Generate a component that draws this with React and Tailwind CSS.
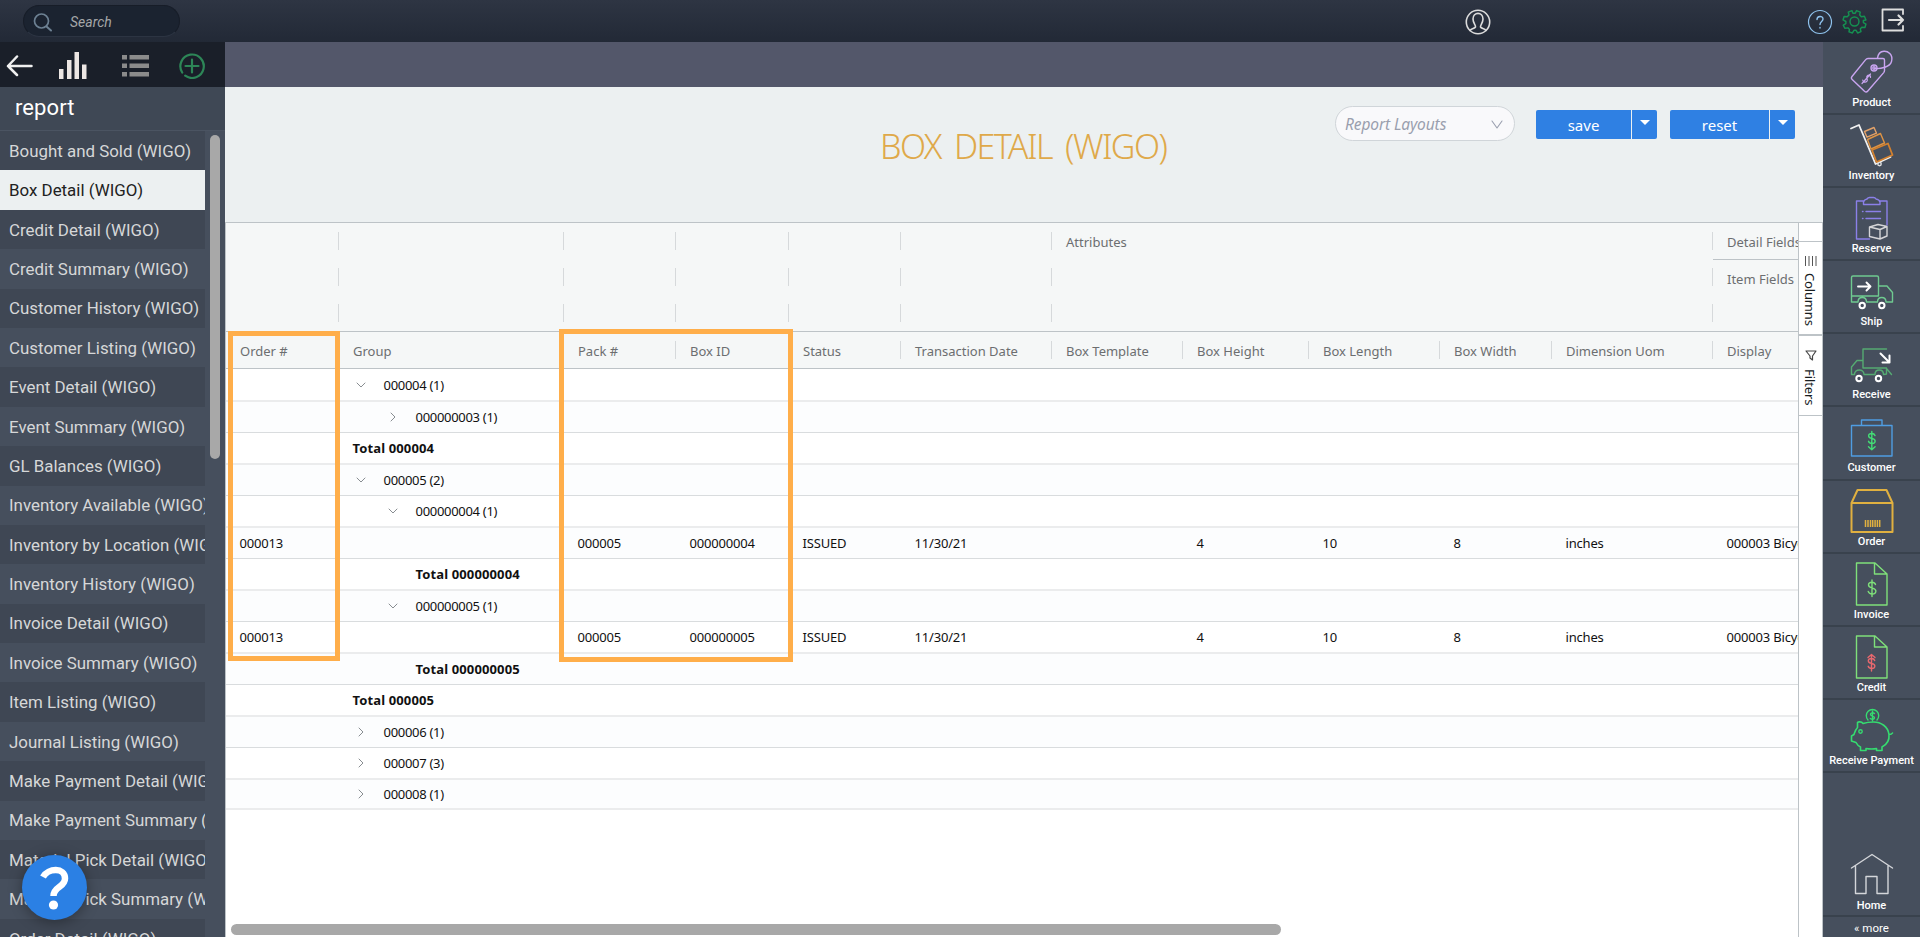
import { ChevronDown, ChevronRight } from "lucide-react";

const reports = [
  "Bought and Sold (WIGO)",
  "Box Detail (WIGO)",
  "Credit Detail (WIGO)",
  "Credit Summary (WIGO)",
  "Customer History (WIGO)",
  "Customer Listing (WIGO)",
  "Event Detail (WIGO)",
  "Event Summary (WIGO)",
  "GL Balances (WIGO)",
  "Inventory Available (WIGO)",
  "Inventory by Location (WIGO)",
  "Inventory History (WIGO)",
  "Invoice Detail (WIGO)",
  "Invoice Summary (WIGO)",
  "Item Listing (WIGO)",
  "Journal Listing (WIGO)",
  "Make Payment Detail (WIGO)",
  "Make Payment Summary (WIGO)",
  "Material Pick Detail (WIGO)",
  "Material Pick Summary (WIGO)",
  "Order Detail (WIGO)",
];

const columns = [
  { key: "order", label: "Order #", width: "w-[113px]" },
  { key: "group", label: "Group", width: "w-[225px]" },
  { key: "pack", label: "Pack #", width: "w-[112px]" },
  { key: "box", label: "Box ID", width: "w-[113px]" },
  { key: "status", label: "Status", width: "w-[112px]" },
  { key: "date", label: "Transaction Date", width: "w-[151px]" },
  { key: "template", label: "Box Template", width: "w-[131px]" },
  { key: "height", label: "Box Height", width: "w-[126px]" },
  { key: "length", label: "Box Length", width: "w-[131px]" },
  { key: "boxWidth", label: "Box Width", width: "w-[112px]" },
  { key: "uom", label: "Dimension Uom", width: "w-[161px]" },
  { key: "display", label: "Display", width: "w-[160px]" },
];

const shipped = {
  order: "000013",
  pack: "000005",
  status: "ISSUED",
  date: "11/30/21",
  height: "4",
  length: "10",
  boxWidth: "8",
  uom: "inches",
  display: "000003 Bicycle",
};

const rows = [
  { h: "h-[33px]", group: "000004 (1)", level: 0, open: true },
  { h: "h-[31px]", group: "000000003 (1)", level: 1, open: false },
  { h: "h-[32px]", total: "Total 000004", level: 0 },
  { h: "h-[31px]", group: "000005 (2)", level: 0, open: true },
  { h: "h-[32px]", group: "000000004 (1)", level: 1, open: true },
  { h: "h-[31px]", data: { ...shipped, box: "000000004" } },
  { h: "h-[32px]", total: "Total 000000004", level: 1 },
  { h: "h-[31px]", group: "000000005 (1)", level: 1, open: true },
  { h: "h-[32px]", data: { ...shipped, box: "000000005" } },
  { h: "h-[31px]", total: "Total 000000005", level: 1 },
  { h: "h-[32px]", total: "Total 000005", level: 0 },
  { h: "h-[31px]", group: "000006 (1)", level: 0, open: false },
  { h: "h-[32px]", group: "000007 (3)", level: 0, open: false },
  { h: "h-[30px]", group: "000008 (1)", level: 0, open: false },
];

const Svg = ({ children, className = "", ...props }) => (
  <svg
    fill="none"
    stroke="currentColor"
    strokeWidth="1.4"
    strokeLinecap="round"
    strokeLinejoin="round"
    className={className}
    {...props}
  >
    {children}
  </svg>
);

const Dollar = ({ stroke }) => (
  <g stroke={stroke}>
    <path d="M25.500 22.500c-.6-1.700-2-2.300-3.500-2.300-1.900 0-3.500 1-3.500 2.900 0 4.100 7.400 1.900 7.400 5.900 0 1.900-1.700 3-3.800 3-1.900 0-3.400-.8-3.900-2.600M22 18v16.500" />
  </g>
);

/* Icons share a 44x44 canvas */
const icons = {
  Product: (
    <g stroke="#c9a5f0">
      <path d="M28 8.500H18q-1.500.2-2.500 1.400L2 26.500q-1.300 1.700.2 3L14.500 41.200q1.800 1.500 3.300-.2L33.700 22.600q.8-1 .8-2V10q0-1.500-1.500-1.500h-5" />
      <circle cx="24" cy="18" r="3" />
      <circle cx="24" cy="18" r="1.200" />
      <path d="M24.500 18.500C31 19 40 17 41.500 11.500 43.500 4 37.500 1 34 1.200c-4 .2-6 2.800-6.500 7" />
      <path strokeWidth="1.200" d="M20.500 27.500c.5-2-1.500-3.200-3-2-2 1.500.3 3.500-.3 5.200-.8 2-4.300 1.800-4.500-.7M20.500 24 12 33.500" />
    </g>
  ),
  Inventory: (
    <g>
      <path stroke="#f1f1f1" strokeWidth="1.800" d="M1 5.500 9 2l16.500 39 15-7" />
      <circle cx="29.500" cy="41" r="1.700" stroke="#e0e0e0" />
      <path stroke="#e3a269" d="m14.500 8.500 9.500-4 2.500 5.700-9.500 4z" />
      <path stroke="#df9444" d="m17.500 16.500 13-6 4 9.500-13.500 6z" />
      <path stroke="#d3812f" strokeWidth="1.800" d="m22 27 16-6.500 4.500 11.500-16 7z" />
    </g>
  ),
  Reserve: (
    <g stroke="#8b80e8">
      <path d="M13.500 5H6.500v38h13M30 5h7v24M13.500 8.500h16.500V6q-.8-2.500-4-3-.8-1.500-2.500-1.500h-4Q18 1.500 17 3q-2.700.5-3.500 3z" />
      <path d="M12.500 15.500h.5m3 0h14.500m-18 7h.5m3 0h14.500" />
      <path stroke="#d5d5d8" d="m19.500 31 8.500-2.500 9 2v9.500l-7 3-10.500-2.500zm0 0 10.500 2.500 7-3m-7 3V43" />
    </g>
  ),
  Ship: (
    <g stroke="#6fca90">
      <path d="M8 33H1.500V8.500q0-1.500 1.500-1.500h24q1.500 0 1.500 1.500V27H1.500M16.500 33h11M36 33h6.500V23.500L37 17h-8.500M8 33c0-6 8.500-6 8.500 0M27.500 33c0-6 8.500-6 8.500 0" />
      <path stroke="#fff" strokeWidth="1.900" d="M8 17.500h12.500M16.500 13.500l4 4-4 4" />
      <circle stroke="#fff" strokeWidth="2" cx="12.200" cy="36.500" r="2.700" />
      <circle stroke="#fff" strokeWidth="2" cx="31.800" cy="36.500" r="2.700" />
    </g>
  ),
  Receive: (
    <g stroke="#55ab72">
      <path d="M36.500 7H13v19h23.500v6l-3 .5M13 18.500H7L1.500 25v7.500h3M14 32.500h11M36.500 26.500 41.500 32.500M4.500 32.500c0-6 9.500-6 9.500 0M25 32.500c0-6 8.500-6 8.500 0" />
      <path stroke="#fff" strokeWidth="2" d="m30.500 11.500 9 9m0-7v7h-7" />
      <circle stroke="#fff" strokeWidth="2" cx="9" cy="36.500" r="2.700" />
      <circle stroke="#fff" strokeWidth="2" cx="28.500" cy="36.500" r="2.700" />
    </g>
  ),
  Customer: (
    <g stroke="#4f9de2">
      <path d="M1.500 10.500h40.500v30.500H1.500zM11.500 10.500V5h20.500v5.500" />
      <g stroke="#43dc75">
        <path d="M25 20.500c-.5-1.500-1.600-2-3.200-2-4.300 0-4.200 4.200 0 4.900 4.800.8 4 5.100.2 5.100-1.900 0-3-.7-3.500-2.200M21.800 16.500v18M18.500 31.800l3.300 3 3.300-3" />
      </g>
    </g>
  ),
  Order: (
    <g stroke="#e0b040" strokeWidth="2">
      <path d="M1.500 14h41v29h-41zM1.500 14 7.500 1h29l6 13" />
      <path strokeWidth="1.500" strokeLinecap="butt" d="M15.500 31v7m2.500-7v7m2.500-7v7m2.200-7v7m2.400-7v7m2.300-7v7m2.300-7v7" />
    </g>
  ),
  Invoice: (
    <g stroke="#7fe07a">
      <path d="M6.500 1H25l12 11v31H6.500zM24.500 1v11H37" />
      <Dollar stroke="#7fe07a" />
    </g>
  ),
  Credit: (
    <g stroke="#7fe07a">
      <path d="M6.500 1H25l12 11v31H6.500zM24.500 1v11H37" />
      <path stroke="#e8686e" d="M24.700 25.500c-.5-1.500-1.600-2-3.200-2-4.300 0-4.200 4.200 0 4.900 4.800.8 4 5.100.2 5.100-1.900 0-3-.7-3.500-2.200M21.500 19.500v16.500M18 22.500l3.500-3 3.500 3" />
    </g>
  ),
  "Receive Payment": (
    <g stroke="#35dc70">
      <path d="M18 12a6.200 6.200 0 1 1 9 0" />
      <path d="M24.500 5.500c-1.500-1.300-4-.8-4 1 0 2 4 1.200 4 3.200 0 1.900-2.800 2-4.200.7M22.500 3v10" />
      <path strokeWidth="1.600" d="M13 15.500c-1.500-2.300-5-1.700-5.500-1v5C5.500 21.500 5 23.500 4 26.500l-2.500 1.500v5L6 34.500c1 2 2.500 3.500 4.500 4.500V42.500H16v-2q6 1 10.500 0v2H32V39c5-2.500 7.500-7 7-12.500 2 0 3-.5 3.500-1.500M39 26.500c-1-8-8-12.500-15.500-12.500-4.500 0-7.500.5-10.500 1.500" />
      <circle cx="10.500" cy="23.500" r="1.700" />
    </g>
  ),
  Home: (
    <path stroke="#d4d6da" d="M1.500 15 22 1.500 42.500 15M5.500 13v27.500H16V23.500h11v17h11V13" />
  ),
};

const modules = [
  "Product",
  "Inventory",
  "Reserve",
  "Ship",
  "Receive",
  "Customer",
  "Order",
  "Invoice",
  "Credit",
  "Receive Payment",
];

const Module = ({ name }) => (
  <div className="flex h-full flex-col items-center pt-[8px]">
    <Svg viewBox="0 0 44 44" className="h-[44px] w-[44px] shrink-0">
      {icons[name]}
    </Svg>
    <span className="mt-[2px] whitespace-nowrap text-[11px] leading-[14px] font-medium text-white">{name}</span>
  </div>
);

const TopBar = () => (
  <header className="flex h-[42px] shrink-0 items-center bg-linear-to-b from-[#2e3543] to-[#222936]">
    <div className="ml-[23px] flex h-[32px] w-[157px] items-center rounded-full border border-[#171d28] border-b-[#2c3442] bg-[#1b2330]">
      <Svg viewBox="0 0 20 20" className="mt-[3px] ml-[9px] h-[20px] w-[20px] text-[#6d8193]" strokeWidth="1.700">
        <circle cx="8.500" cy="8" r="7" />
        <path strokeWidth="2" d="m13.500 13.500 4.500 4" />
      </Svg>
      <span className="mt-[2px] ml-[17px] text-[14px] text-[#a5a7a8] italic">Search</span>
    </div>
    <Svg viewBox="0 0 26 26" className="mt-px ml-[1285px] h-[26px] w-[26px] text-[#dcdcdc]" strokeWidth="1.600">
      <circle cx="13" cy="13" r="11.700" />
      <path d="M5 21.500c1.500-2 4.500-2 5.500-3.500.6-1.500-2.500-4-2.500-8C8 2.500 18 2.500 18 10c0 4-3 6.500-2.500 8 1 1.500 4 1.500 5.500 3.500" />
    </Svg>
    <div className="mt-px ml-auto flex items-center pr-[15px]">
      <Svg viewBox="0 0 26 26" className="h-[26px] w-[26px] text-[#8fc3ee]">
        <circle cx="13" cy="13" r="11.500" strokeWidth="1.200" />
        <path d="M10 10.500c0-4 6-4 6-.5 0 2.500-3 2.500-3 5.500M13 18.500v.5" />
      </Svg>
      <Svg viewBox="0 0 24 24" className="ml-[9px] h-[25px] w-[25px] text-[#159151]">
        <circle cx="12" cy="12" r="4.300" />
        <path d="m10.500 4-1-2.500L6 3l.7 2.700L5 7.500l-3-.3-1 3.300L3.700 12l0 2-2.500 1.500 1.500 3 3-.4 1.500 1.500L6.700 22l3.300 1 1.500-2.500h2L15 23l3.200-1.300-.6-2.700 1.500-1.500 2.900.3 1-3.300-2.500-1.500v-2L23 10.500 21.500 7l-3 .4L17 5.700 17.500 3 14 1.500 12.700 4z" />
      </Svg>
      <Svg viewBox="0 0 24 24" className="mb-[3px] ml-[14px] h-[24px] w-[24px] text-[#dedede]" strokeWidth="1.800">
        <path d="M22 6V1.500H1.500v21H22V18" />
        <path strokeWidth="2.200" d="M8 12h14m-4.500-4.500L22 12l-4.500 4.500" />
      </Svg>
    </div>
  </header>
);

const ReportMenu = () => (
  <aside className="flex w-[225px] shrink-0 flex-col bg-[#464f5d]">
    <div className="flex h-[45px] shrink-0 items-center bg-[#1a1f29] pt-[2px]">
      <Svg viewBox="0 0 26 22" className="ml-[6px] h-[22px] w-[27px] text-[#f0f0f0]" strokeWidth="2.500">
        <path d="M1.500 11H25M10.500 1.500 1.500 11l9 9" />
      </Svg>
      <svg viewBox="0 0 28 27" className="ml-[26px] h-[27px] w-[28px]" fill="#ece6e3">
        <rect x="0" y="17" width="4.500" height="10" />
        <rect x="8" y="8" width="4.500" height="19" />
        <rect x="15.500" y="0" width="4.500" height="27" />
        <rect x="23" y="12.500" width="4.500" height="14.500" />
      </svg>
      <svg viewBox="0 0 27 22" className="ml-[35px] h-[22px] w-[27px]" fill="#8b8b8b">
        <path d="M0 0h5v4.500H0zM7.500 0H27v4.500H7.500zM0 8.500h5V13H0zM7.500 8.500H27V13H7.500zM0 17h5v4.500H0zM7.500 17H27v4.500H7.500z" />
      </svg>
      <Svg viewBox="0 0 26 26" className="ml-[30px] h-[26px] w-[26px] text-[#2d8657]" strokeWidth="2.200">
        <path d="M3.200 19.500a11.700 11.700 0 1 1 3 3.200M6.500 13h13M13 6.500v13" />
      </Svg>
    </div>
    <div className="flex h-[44px] shrink-0 items-center border-b border-[#4b5462] bg-[#3f4855] pl-[15px] text-[22px] text-white">
      <span className="-mt-[2px] tracking-[0.100px]">report</span>
    </div>
    <div className="flex min-h-0 flex-1">
      <ul className="w-[205px] overflow-hidden">
        {reports.map((name, i) => (
          <li
            key={name}
            className={`flex h-[39.400px] items-center overflow-hidden pt-[1.500px] pl-[9px] text-[16.900px] whitespace-nowrap ${
              i === 1 ? "bg-[#ecf0f1] text-[#222]" : i % 2 ? "bg-[#464f5d] text-[#d6d7d8]" : "bg-[#3f4754] text-[#d6d7d8]"
            }`}
          >
            {name}
          </li>
        ))}
      </ul>
      <div className="mt-[4px] ml-[5px] h-[324px] w-[10px] rounded-full bg-[#a8a8a8]" />
    </div>
  </aside>
);

const PageHeader = () => (
  <div className="flex h-[135px] shrink-0 bg-[#ecf0f1] pt-[19px]">
    <div className="w-[655px]" />
    <h1 className="mt-[20px] w-[455px] text-[34px] leading-[40px] font-light tracking-[-1.600px] whitespace-nowrap text-[#dfa94a] [word-spacing:6px]">
      BOX DETAIL (WIGO)
    </h1>
    <div className="flex h-[35px] w-[180px] items-center justify-between rounded-full border border-[#d0d5d9] bg-[#f9f9fb] pt-[2px] pr-[11px] pl-[9px] text-[15.500px] tracking-[-0.100px] text-[#9a9fae] italic">
      Report Layouts
      <Svg viewBox="0 0 12 9" className="h-[9px] w-[12px]" strokeWidth="1.100">
        <path d="m1 1 5 7 5-7" />
      </Svg>
    </div>
    {[
      { label: "save", width: "w-[95px]", gap: "ml-[21px]" },
      { label: "reset", width: "w-[99px]", gap: "ml-[13px]" },
    ].map((b) => (
      <div key={b.label} className={`mt-[4px] flex h-[29px] gap-px text-white ${b.gap}`}>
        <button className={`rounded-l-[2px] bg-[#2f80e3] pt-[2px] text-[15px] ${b.width}`}>{b.label}</button>
        <button className="flex w-[25px] justify-center rounded-r-[2px] bg-[#2f80e3] pt-[10px]">
          <svg viewBox="0 0 10 5" className="h-[5px] w-[10px]" fill="#fff">
            <path d="M0 0h10L5 5z" />
          </svg>
        </button>
      </div>
    ))}
  </div>
);

const Divider = () => <div className="h-[18px] w-px bg-[#d6d9db]" />;

const GridHeader = () => (
  <div className="shrink-0 bg-[#f5f7f7] text-[13px] text-[#6c6e70]">
    <div className="flex h-[109px] border-b border-[#bdc3c7]">
      {columns.slice(0, 6).map((c) => (
        <div key={c.key} className={`flex shrink-0 flex-col items-end gap-[18px] pt-[9px] ${c.width}`}>
          <Divider />
          <Divider />
          <Divider />
        </div>
      ))}
      <div className="flex w-[661px] shrink-0 justify-between pt-[9px] pl-[14px]">
        <span className="leading-[20px]">Attributes</span>
        <div className="flex flex-col gap-[18px]">
          <Divider />
          <Divider />
          <Divider />
        </div>
      </div>
      <div className="w-[160px] shrink-0">
        <div className="flex h-[37px] items-center border-b border-[#bdc3c7] pt-[3px] pl-[14px]">Detail Fields</div>
        <div className="flex h-[36px] items-center pt-[3px] pl-[14px]">Item Fields</div>
      </div>
    </div>
    <div className="flex h-[37px] items-center border-b border-[#bdc3c7]">
      {columns.map((c) => (
        <div key={c.key} className={`flex shrink-0 items-center justify-between pl-[14px] whitespace-nowrap ${c.width}`}>
          <span className="pt-[3px]">{c.label}</span>
          <Divider />
        </div>
      ))}
    </div>
  </div>
);

const GroupCell = ({ row }) => {
  const indent = row.level ? "pl-[32px]" : "pl-0";
  if (row.total) {
    return <span className={`font-bold tracking-[0.130px] ${row.level ? "pl-[63px]" : ""}`}>{row.total}</span>;
  }
  if (!row.group) return null;
  const Icon = row.open ? ChevronDown : ChevronRight;
  return (
    <div className={`flex items-center ${indent}`}>
      <Icon className="mr-[15px] mb-[2px] h-[16px] w-[16px] text-[#7f8489]" strokeWidth={1.400} />
      <span className="tracking-[-0.300px]">{row.group}</span>
    </div>
  );
};

const Grid = () => (
  <div className="relative flex min-h-0 flex-1 border-t border-[#bdc3c7]">
    <div className="flex w-[1573px] shrink-0 flex-col overflow-hidden border-l border-[#bdc3c7] bg-white">
      <GridHeader />
      {rows.map((row, i) => (
        <div
          key={i}
          className={`flex w-[1637px] shrink-0 items-center pt-[2px] text-[13px] text-[#111] ${row.h} ${
            i % 2 ? "bg-[#fcfdfe]" : "bg-white"
          } ${i % 2 && i !== 13 ? "border-b border-[#d9dcde]" : "border-b-2 border-[#ebeced]"}`}
        >
          {columns.map((c) => (
            <div key={c.key} className={`shrink-0 pl-[13.500px] tracking-[-0.180px] whitespace-nowrap ${c.width}`}>
              {c.key === "group" ? <GroupCell row={row} /> : row.data?.[c.key]}
            </div>
          ))}
        </div>
      ))}
      <div className="mt-auto mb-[2px] ml-[5px] h-[11px] w-[1050px] shrink-0 rounded-full bg-[#a8a8a8]" />
    </div>
    <div className="flex w-[25px] shrink-0 flex-col border-x border-[#bdc3c7] bg-white text-[13px] text-[#181d1f]">
      <div className="h-[19px] border-b border-[#bdc3c7]" />
      <div className="flex h-[94px] flex-col items-center border-b-2 border-[#bdc3c7] pt-[14px]">
        <svg viewBox="0 0 12 10" className="h-[10px] w-[12px]" stroke="#555">
          <path d="M.5 0v10M4 0v10M7.500 0v10M11 0v10" />
        </svg>
        <span className="mt-[7px] -ml-[2px] tracking-[-0.150px] [writing-mode:vertical-rl]">Columns</span>
      </div>
      <div className="flex h-[80px] flex-col items-center border-b border-[#bdc3c7] pt-[14px]">
        <Svg viewBox="0 0 12 11" className="h-[11px] w-[12px] text-[#444]" strokeWidth="1.200">
          <path d="M1 1h10L7.500 6v4l-2.500-2V6z" />
        </Svg>
        <span className="mt-[8px] -ml-[2px] tracking-[-0.100px] [writing-mode:vertical-rl]">Filters</span>
      </div>
    </div>

    {/* Highlighted columns */}
    <div className="absolute top-[108px] left-[3px] h-[330px] w-[112px] border-[5px] border-[#ffae4a]" />
    <div className="absolute top-[106px] left-[334px] h-[333px] w-[234px] border-[5px] border-[#ffae4a]" />
  </div>
);

const ModuleBar = () => (
  <nav className="flex w-[97px] shrink-0 flex-col bg-[#464f5d]">
    {modules.map((name) => (
      <div key={name} className="h-[73.100px] shrink-0 border-b-2 border-[#39424d]">
        <Module name={name} />
      </div>
    ))}
    <div className="mt-auto h-[72px] border-b-2 border-[#39424d]">
      <Module name="Home" />
    </div>
    <div className="h-[20px] pt-[4px] text-center text-[11.500px] leading-[14px] text-white">« more</div>
  </nav>
);

const App = () => {
  return (
    <div className="relative flex h-[937px] w-[1920px] flex-col overflow-hidden bg-white font-[Roboto,sans-serif]">
      <TopBar />
      <div className="flex min-h-0 flex-1">
        <ReportMenu />
        <main className="flex w-[1598px] shrink-0 flex-col font-['Noto_Sans',sans-serif]">
          <div className="h-[45px] shrink-0 bg-[#53576a]" />
          <PageHeader />
          <Grid />
        </main>
        <ModuleBar />
      </div>

      {/* Help launcher */}
      <button className="absolute top-[855px] left-[22px] flex h-[65px] w-[65px] items-center justify-center rounded-full bg-[#2b80e4] shadow-[0_2px_14px_rgba(0,0,0,0.35)]">
        <svg viewBox="0 0 30 44" className="h-[44px] w-[30px]" fill="none" stroke="#fff" strokeWidth="6.500">
          <path d="M3 11C8 2 25 1 25 12.500c0 9-11.500 8-11.500 17.500" />
          <circle cx="13.500" cy="39" r="4.600" fill="#fff" stroke="none" />
        </svg>
      </button>
    </div>
  );
};

export default App;
